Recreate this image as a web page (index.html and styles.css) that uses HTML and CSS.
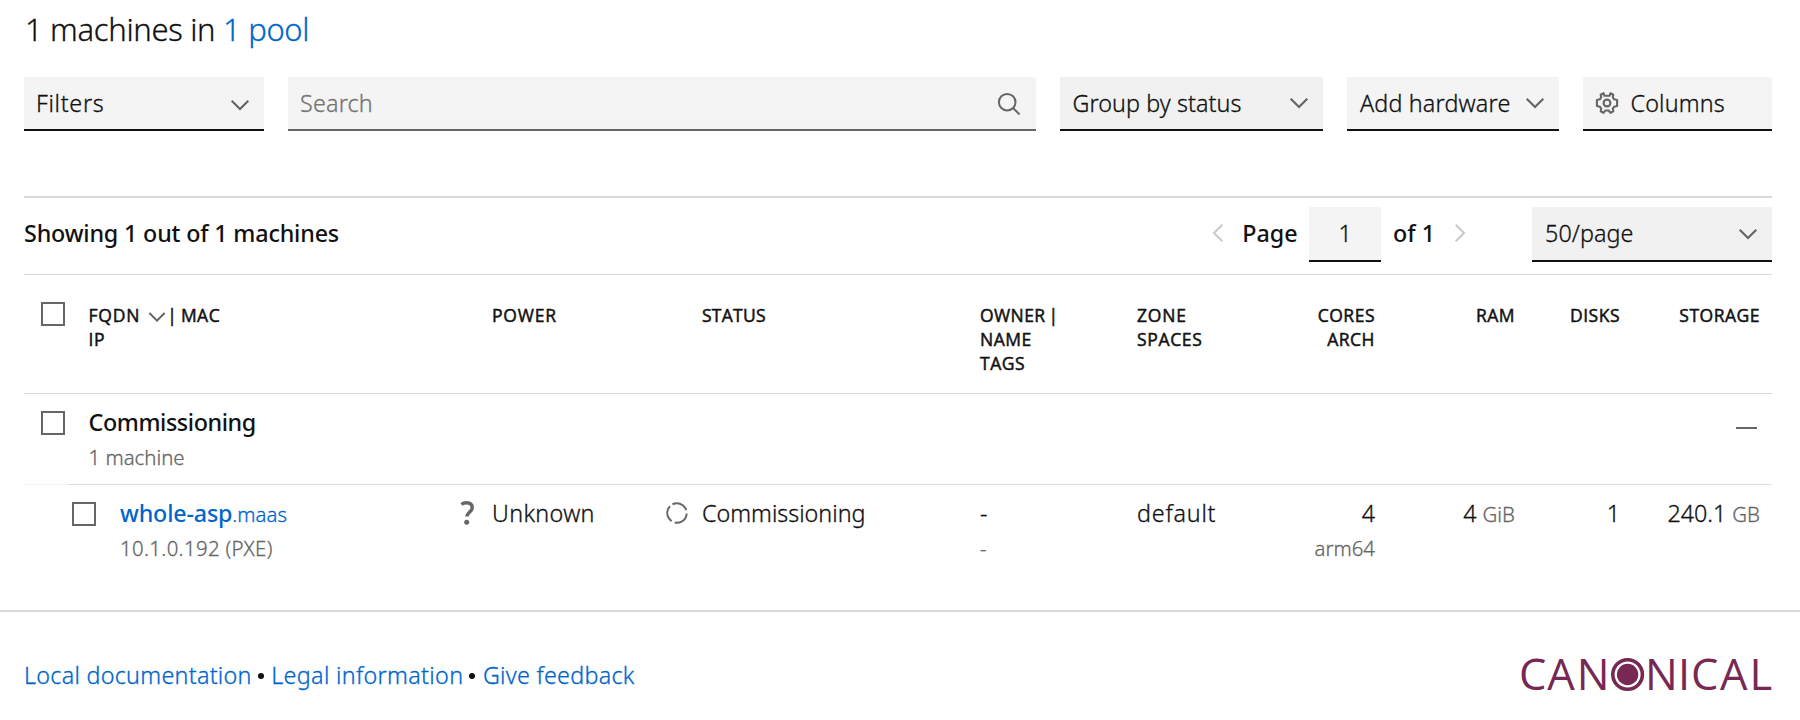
FILE: index.html
```html
<!DOCTYPE html>
<html lang="en">
<head>
<meta charset="utf-8">
<title>Machines</title>
<link rel="stylesheet" href="styles.css">
</head>
<body>
<svg class="defs" width="0" height="0" aria-hidden="true">
  <symbol id="chevron" viewBox="0 0 24 24"><path d="M3.7 7.7 12 16l8.3-8.3" fill="none" stroke="currentColor" stroke-width="2.2"/></symbol>
</svg>
<main class="page">
  <h1 class="title"><span class="title-text">1 machines in <a href="#">1 pool</a></span></h1>

  <div class="toolbar">
    <button class="field filters"><span class="t-filters">Filters</span><svg class="icon low"><use href="#chevron"/></svg></button>
    <div class="field search"><span class="t-search">Search</span>
      <svg class="icon" viewBox="0 0 24 24"><g fill="none" stroke="currentColor" stroke-width="2"><circle cx="10.2" cy="11.2" r="8.3"/><path d="m16 17 6.6 6.4"/></g></svg>
    </div>
    <button class="field group"><span class="t-group">Group by status</span><svg class="icon"><use href="#chevron"/></svg></button>
    <button class="field add"><span class="t-add">Add hardware</span><svg class="icon"><use href="#chevron"/></svg></button>
    <button class="field columns">
      <svg class="icon" viewBox="0 0 24 24"><g fill="none" stroke="currentColor" stroke-width="2.1" stroke-linejoin="round"><circle cx="12" cy="12" r="3.4"/><path d="M9.4 4.8 8.5 2.2 5.7 3.7 6.2 6.4 5 8.2 1.9 8.9v6.2l3.1.7 1.2 1.8-.5 2.7 2.8 1.5 1.9-2.3h3.2l1.9 2.3 2.8-1.5-.5-2.7 1.2-1.8 3.1-.7V8.9L19 8.2l-1.2-1.8.5-2.7-2.8-1.5-.9 2.6z"/></g></svg>
      <span class="t-columns">Columns</span>
    </button>
  </div>

  <div class="summary">
    <strong class="count"><span class="t-count">Showing 1 out of 1 machines</span></strong>
    <div class="pager">
      <svg class="icon arrow prev"><use href="#chevron"/></svg>
      <strong>Page</strong>
      <span class="field page-no">1</span>
      <strong>of 1</strong>
      <svg class="icon arrow next"><use href="#chevron"/></svg>
    </div>
    <button class="field page-size"><span class="t-size">50/page</span><svg class="icon"><use href="#chevron"/></svg></button>
  </div>

  <section class="table">
    <div class="row head">
      <div><span class="check"></span></div>
      <div class="head-name"><span class="t-fqdn">FQDN</span><svg class="sort"><use href="#chevron"/></svg><span class="t-mac">| MAC</span><br>IP</div>
      <div class="inset"><span class="t-power">POWER</span></div>
      <div class="inset t-status">STATUS</div>
      <div><span class="t-owner">OWNER |</span><br>NAME<br>TAGS</div>
      <div><span class="t-zone">ZONE</span><br><span class="t-spaces">SPACES</span></div>
      <div class="num">CORES<br>ARCH</div>
      <div class="num">RAM</div>
      <div class="num">DISKS</div>
      <div class="num">STORAGE</div>
    </div>
    <div class="row group-row">
      <div><span class="check"></span></div>
      <div class="group-name">
        <div class="line"><strong class="t-comm">Commissioning</strong></div>
        <div class="line sub">1 machine</div>
      </div>
      <div class="collapse"><i class="minus"></i></div>
    </div>
    <div class="row machine">
      <div><span class="check"></span></div>
      <div class="name">
        <div class="line"><a href="#"><strong class="t-whole">whole-asp</strong><span class="small">.maas</span></a></div>
        <div class="line sub"><span class="t-ip">10.1.0.192 (PXE)</span></div>
      </div>
      <div class="with-icon"><span class="slot"><svg class="icon" viewBox="0 0 24 24"><path d="M6.4 3.3C8 2.2 9.8 1.8 11.5 1.8c3.7 0 5.7 1.9 5.7 4.9 0 3.9-4.9 4.7-5.2 8.8" fill="none" stroke="currentColor" stroke-width="3.4"/><circle cx="11.7" cy="21.3" r="2.5" fill="currentColor"/></svg></span><div class="line"><span class="t-unk">Unknown</span></div></div>
      <div class="with-icon"><span class="slot"><svg class="icon" viewBox="0 0 24 24"><circle cx="12" cy="12" r="9.7" fill="none" stroke="currentColor" stroke-width="2" stroke-dasharray="17 3.3" transform="rotate(-118 12 12)"/></svg></span><div class="line">Commissioning</div></div>
      <div><div class="line">-</div><div class="line sub">-</div></div>
      <div><div class="line"><span class="t-default">default</span></div></div>
      <div class="num"><div class="line">4</div><div class="line sub">arm64</div></div>
      <div class="num"><div class="line">4 <span class="small unit">GiB</span></div></div>
      <div class="num"><div class="line">1</div></div>
      <div class="num"><div class="line">240.1 <span class="small unit">GB</span></div></div>
    </div>
  </section>
</main>
<footer class="footer">
  <nav class="links"><a href="#" class="t-local">Local documentation</a><i class="dot"></i><a href="#" class="t-legal">Legal information</a><i class="dot"></i><a href="#" class="t-give">Give feedback</a></nav>
  <svg class="logo" viewBox="0 0 252 40" width="252" height="40" role="img" aria-label="Canonical">
    <text y="35.2" x="-1 27.2 56.8 125 158 171 200 229.5">CANNICAL</text>
    <circle cx="107.6" cy="19.5" r="14.8" fill="none" stroke="#772953" stroke-width="3.6"/>
    <circle cx="107.6" cy="19.5" r="10.7" fill="#772953"/>
  </svg>
</footer>
</body>
</html>
```
FILE: styles.css
```css
* { box-sizing: border-box; }
body { margin: 0; background: #fff; color: #111; font: 300 23.3px/36px "Noto Sans", sans-serif; -webkit-text-stroke: .3px; }
a { color: #06c; text-decoration: none; }
strong { font-weight: 500; -webkit-text-stroke: 0; }
.defs { display: block; }
.page { height: 610px; padding: 0 28px 0 24px; }
.title { margin: 0; height: 77px; padding-left: 1px; font-size: 31px; line-height: 58px; font-weight: 300; white-space: nowrap; }
.title-text { letter-spacing: -.32px; }

.icon { width: 24px; height: 24px; flex: none; color: #666; display: block; }
.low { position: relative; top: 2px; }
.field { display: flex; align-items: center; justify-content: space-between; height: 54px; padding: 0 12px; border: 0; border-bottom: 2px solid #111; background: #f4f4f4; color: #111; font: inherit; white-space: nowrap; }
.toolbar { display: flex; gap: 24px; height: 119px; }
.filters { width: 240px; }
.search { flex: 1; padding-right: 15px; border-bottom-color: #666; color: #757575; }
.group { width: 263px; padding-left: 12.5px; background: #f1f1f1; }
.add { width: 212px; padding-left: 13px; }
.columns { width: 189px; justify-content: flex-start; gap: 11.5px; }

.summary { display: flex; align-items: flex-start; height: 79px; padding-top: 9px; border-top: 2px solid #d9d9d9; border-bottom: 1px solid #d9d9d9; line-height: 53px; white-space: nowrap; }
.count { flex: 1; }
.summary .field { height: 55px; }
.pager { display: flex; align-items: flex-start; }
.arrow { color: #ccc; margin-top: 14px; }
.prev { transform: rotate(90deg); margin-right: 12.5px; }
.next { transform: rotate(-90deg); margin: 14px 60px 0 13px; }
.page-no { width: 72px; margin: 0 12px 0 11.5px; padding: 0; justify-content: center; }
.page-size { width: 240px; padding-left: 13px; background: #f1f1f1; }

.row { display: grid; grid-template-columns: 64px 367px 210px 315px 157px 143px 95px 140px 105px 140px; padding-right: 12px; }
.head { height: 119px; padding-top: 28px; border-bottom: 1px solid #d9d9d9; font-family: "Open Sans", "Noto Sans", sans-serif; font-size: 17.5px; line-height: 24px; font-weight: 500; letter-spacing: .5px; white-space: nowrap; -webkit-text-stroke: .5px; }
.head-name { padding-left: .5px; }
.inset { padding-left: 37px; }
.num { text-align: right; }
.check { display: block; width: 24px; height: 24px; border: 2px solid #666; background: #fff; margin: 7px 0 0 17px; }
.head .check { margin-top: -1px; }
.sort { width: 22px; height: 22px; margin: -4px 3px -4px 5.5px; vertical-align: -2px; color: #666; }
.group-row { height: 90px; padding-top: 10px; }
.group-name { padding-left: .5px; }
.collapse { grid-column: 3 / -1; }
.minus { display: block; width: 21px; height: 2px; margin: 23px 3px 0 auto; background: #666; }
.line { height: 36px; white-space: nowrap; }
.sub { height: 34px; line-height: 34px; font-size: 20.4px; color: #666; }
.small { font-size: 20.4px; }
.unit { color: #666; }
.machine { padding-top: 11px; background: linear-gradient(90deg, #f5f5f5 44px, #dfdfdf 44px) top / 100% 1px no-repeat; }
.machine .check { margin-left: 48px; }
.name { padding-left: 32px; }
.with-icon { display: flex; }
.slot { width: 37px; flex: none; padding-top: 6px; }

.footer { display: flex; justify-content: space-between; height: 110px; padding: 0 28px 0 24px; border-top: 2px solid #d9d9d9; }
.links { display: flex; align-items: center; height: 126px; white-space: nowrap; }
.dot { width: 6px; height: 6px; margin: 1px 7.5px 0 6px; border-radius: 50%; background: #111; }
.logo { display: block; margin-top: 43px; }
.logo text { font: 400 43.5px "Open Sans", sans-serif; fill: #772953; -webkit-text-stroke: 1px #772953; }

.t-filters { letter-spacing: .7px; }
.t-search { letter-spacing: .2px; }
.t-group, .t-size { letter-spacing: .08px; }
.t-add, .t-columns { letter-spacing: .17px; }
.t-count, .t-whole { letter-spacing: -.17px; }
.t-comm { letter-spacing: -.4px; }
.t-ip, .t-unk { letter-spacing: .35px; }
.t-default { letter-spacing: .8px; }
.t-local, .t-give { letter-spacing: .28px; }
.t-legal { letter-spacing: .33px; }
.t-fqdn, .t-zone, .t-power { letter-spacing: .8px; }
.t-spaces { letter-spacing: .65px; }
.t-status { letter-spacing: .25px; }
.t-mac { margin-left: -3.5px; letter-spacing: .5px; word-spacing: -1.5px; }
.t-owner { letter-spacing: .4px; word-spacing: -2px; }
```
